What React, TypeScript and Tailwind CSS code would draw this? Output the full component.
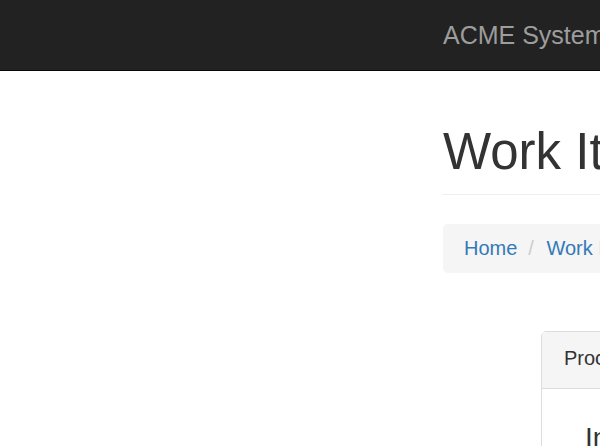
export default function App() {
  return (
    <div className="h-[446px] w-full overflow-hidden bg-white font-['Liberation_Sans',Arial,sans-serif] text-[#333]">
      <nav className="h-[71px] border-b border-[#080808] bg-[#222]">
        <div className="flex h-[70px] items-center pl-[443px]">
          <a className="whitespace-nowrap text-[25px] leading-[25px] text-[#9d9d9d]">ACME Systems</a>
        </div>
      </nav>

      <main className="pl-[443px]">
        <div className="w-[900px]">
          <div className="mt-[53px] border-b border-[#eee] pb-[14px]">
            <h1 className="whitespace-nowrap text-[51px] leading-[56px]">Work Items</h1>
          </div>

          <ol className="mt-[29px] flex h-[49px] rounded-[5px] bg-[#f5f5f5] px-[21px] pt-[10px] text-[20px] leading-[28px]">
            <li>
              <a className="text-[#337ab7]">Home</a>
            </li>
            <li className="pl-[11px] pr-[7px] text-[#ccc]">/&nbsp;</li>
            <li>
              <a className="text-[#337ab7]">Work Items</a>
            </li>
          </ol>

          <section className="ml-[98px] mt-[58px] w-[700px] rounded-[5px] border border-[#ddd]">
            <div className="border-b border-[#ddd] bg-[#f5f5f5] px-[22px] pb-[16px] pt-[12px] text-[20px] leading-[28px]">
              Process Work Item
            </div>
            <div className="pl-[43px] pt-[33px]">
              <h3 className="text-[28px] leading-[31px]">Information</h3>
            </div>
          </section>
        </div>
      </main>
    </div>
  );
}
